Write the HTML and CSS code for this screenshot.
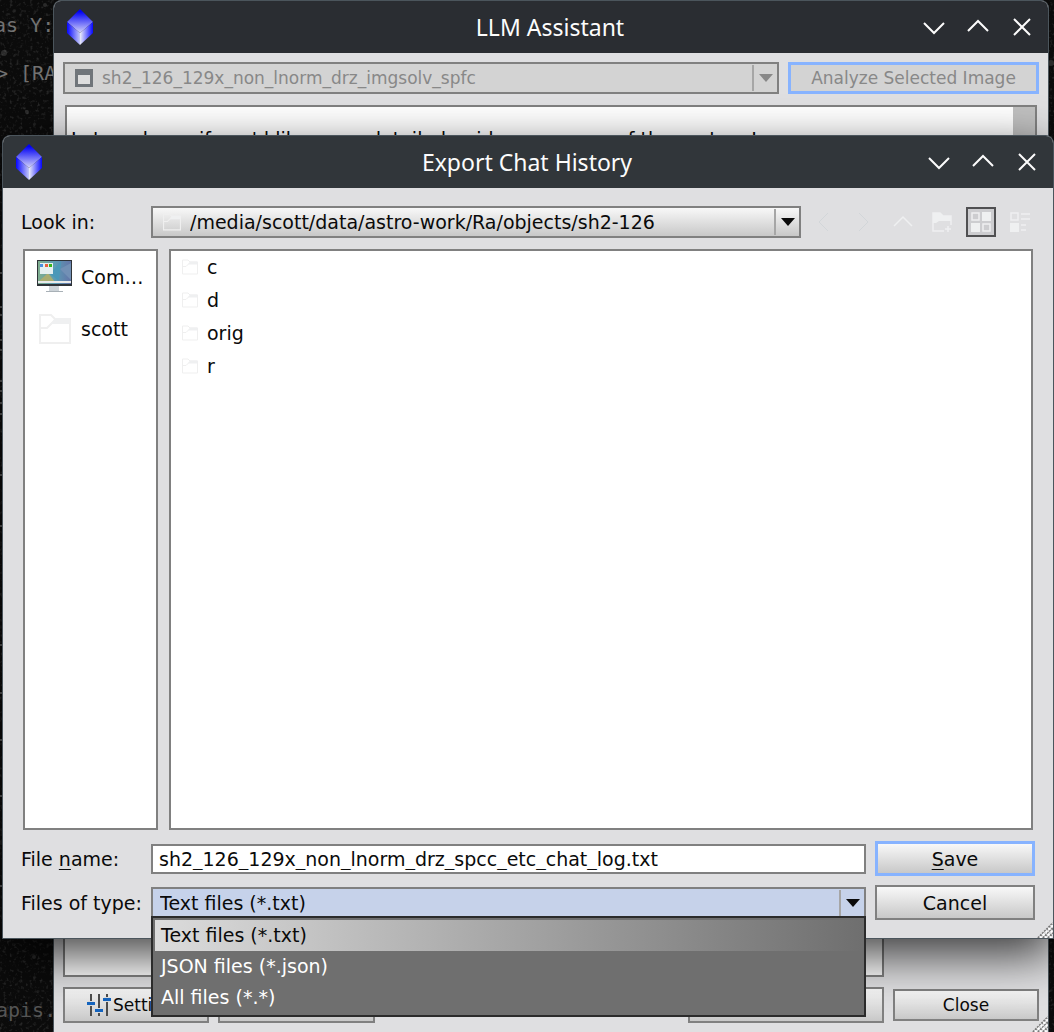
FILE: index.html
```html
<!DOCTYPE html>
<html lang="en">
<head>
<meta charset="utf-8">
<title>Export Chat History</title>
<link rel="stylesheet" href="styles.css">
</head>
<body>
<svg class="defs" width="0" height="0" aria-hidden="true">
  <defs>
    <linearGradient id="gem-top" x1="0" y1="0" x2="0" y2="1"><stop offset="0.1" stop-color="#0000f4"/><stop offset="1" stop-color="#d4d4fb"/></linearGradient>
    <linearGradient id="gem-left"><stop offset="0" stop-color="#0606ff"/><stop offset="1" stop-color="#c4c8f8"/></linearGradient>
    <linearGradient id="gem-right"><stop offset="0" stop-color="#eceefa"/><stop offset="1" stop-color="#0606ff"/></linearGradient>
    <linearGradient id="screen"><stop offset="0" stop-color="#7fae8e"/><stop offset="0.5" stop-color="#5b9cb4"/><stop offset="1" stop-color="#6474a8"/></linearGradient>
    <symbol id="gem" viewBox="0 0 28 36">
      <path d="M14 0 27 13 14 24 1 13Z" fill="url(#gem-top)"/>
      <path d="M1 13 14 24V36L1 24Z" fill="url(#gem-left)"/>
      <path d="M27 13 14 24V36L27 24Z" fill="url(#gem-right)"/>
    </symbol>
    <symbol id="minimize" viewBox="0 0 24 24"><path d="m2 8 10 10L22 8" fill="none" stroke="#fcfcfc" stroke-width="2"/></symbol>
    <symbol id="maximize" viewBox="0 0 24 24"><path d="M2 16 12 6l10 10" fill="none" stroke="#fcfcfc" stroke-width="2"/></symbol>
    <symbol id="close" viewBox="0 0 24 24"><path d="m4 4 16 16M20 4 4 20" fill="none" stroke="#fcfcfc" stroke-width="2"/></symbol>
    <symbol id="folder" viewBox="0 0 32 32">
      <path d="M2 2h10l4 4h15v24H1V2ZM1 15h7l8-8" fill="none" stroke="#efefef" stroke-width="2"/>
      <path d="M16 5h15v6H12Z" fill="#eff0f1"/>
    </symbol>
    <symbol id="arrow" viewBox="0 0 14 8"><path d="M0 0h14L7 8Z" fill="currentColor"/></symbol>
    <symbol id="grip" viewBox="0 0 16 16">
      <path d="M1 16 16 1M6 16 16 6M11 16l5-5" stroke="#777" stroke-width="2" stroke-dasharray="2 1"/>
      <path d="M3 16 16 3M8 16l8-8M13 16l3-3" stroke="#fff" stroke-width="2" stroke-dasharray="2 2"/>
    </symbol>
  </defs>
</svg>

<div class="desktop">
  <svg class="stars" aria-hidden="true">
    <defs>
      <filter id="haze"><feTurbulence type="fractalNoise" baseFrequency="0.3" numOctaves="2" seed="4"/><feColorMatrix values="0 0 0 0 .5  0 0 0 0 .5  0 0 0 0 .5  1.4 0 0 0 -.75"/></filter>
    </defs>
    <rect width="100%" height="100%" filter="url(#haze)" opacity="0.4"/>
    <g fill="#666" opacity="0.35"><circle cx="4" cy="53" r="3"/><circle cx="45" cy="5" r="2"/><circle cx="27" cy="112" r="2"/><circle cx="1051" cy="63" r="3"/><circle cx="34" cy="957" r="2"/></g>
    <path d="M0 273h3M0 307h3M0 315h3M0 340h3M0 350h3M0 381h3M0 391h3M0 403h3M0 414h3M0 475h3M0 526h3M0 645h3M0 693h3M0 740h3M0 796h3M0 886h3" stroke="#606060" stroke-width="2"/>
  </svg>
  <div class="console console-a">as Y:</div>
  <div class="console console-b">&gt; [RA</div>
  <div class="console console-c">apis.</div>

  <section class="window assistant" aria-label="LLM Assistant">
    <header class="titlebar">
      <svg class="gem"><use href="#gem"/></svg>
      <h1>LLM Assistant</h1>
      <div class="controls">
        <button aria-label="Minimize"><svg><use href="#minimize"/></svg></button>
        <button aria-label="Maximize"><svg><use href="#maximize"/></svg></button>
        <button aria-label="Close window"><svg><use href="#close"/></svg></button>
      </div>
    </header>
    <div class="assistant-body">
      <div class="image-row">
        <div class="combo disabled">
          <select disabled aria-label="Image"><option>sh2_126_129x_non_lnorm_drz_imgsolv_spfc</option></select>
          <svg class="combo-icon" viewBox="0 0 18 18"><path d="M0 0h18v18H0Z" fill="#70757a"/><path d="M3 6h12v9H3Z" fill="#dedede"/></svg>
          <span class="combo-arrow"><svg><use href="#arrow"/></svg></span>
        </div>
        <button class="btn focus analyze" disabled>Analyze Selected Image</button>
      </div>
      <div class="chat"><p>Let me know if you'd like more detailed guidance on any of these steps!</p><span class="scroll"></span></div>
      <textarea class="prompt" aria-label="Message"></textarea>
      <div class="action-row">
        <button class="btn settings"><svg viewBox="0 0 24 24"><path d="M4 1v22M12 1v22M20 1v22" stroke="#4d4d4d" stroke-width="2"/><path d="M1 8h6v5H1ZM9 15h6v5H9ZM17 4h6v5h-6Z" fill="#ddd"/><path d="M0 9h8v3H0ZM8 16h8v3H8ZM16 5h8v3h-8Z" fill="#1565c0"/></svg>Settings</button>
        <button class="btn second" aria-label="Clear"></button>
        <button class="btn third" aria-label="Export"></button>
        <button class="btn close-btn">Close</button>
      </div>
    </div>
    <svg class="grip"><use href="#grip"/></svg>
  </section>

  <section class="window dialog" role="dialog" aria-label="Export Chat History">
    <header class="titlebar">
      <svg class="gem"><use href="#gem"/></svg>
      <h1>Export Chat History</h1>
      <div class="controls">
        <button aria-label="Minimize"><svg><use href="#minimize"/></svg></button>
        <button aria-label="Maximize"><svg><use href="#maximize"/></svg></button>
        <button aria-label="Close window"><svg><use href="#close"/></svg></button>
      </div>
    </header>
    <div class="dialog-body">
      <div class="look-row">
        <label for="look">Look in:</label>
        <div class="combo look">
          <select id="look"><option>/media/scott/data/astro-work/Ra/objects/sh2-126</option></select>
          <svg class="combo-icon"><use href="#folder"/></svg>
          <span class="combo-arrow"><svg><use href="#arrow"/></svg></span>
        </div>
        <div class="tools">
          <button aria-label="Back"><svg viewBox="0 0 20 20"><path d="M13 1 4 10l9 9" stroke="#d2d6d9"/></svg></button>
          <button aria-label="Forward"><svg viewBox="0 0 20 20"><path d="m5 1 9 9-9 9" stroke="#d2d6d9"/></svg></button>
          <button aria-label="Parent directory"><svg viewBox="0 0 20 20"><path d="m1 14 9-9 9 9" stroke="#eff0f1" stroke-width="1.5"/></svg></button>
          <button aria-label="New folder"><svg viewBox="0 0 20 20"><path d="M12 19H1V1h7l3 3h8v9M16 14v6M13 17h6" stroke="#eff0f1" stroke-width="1.5"/><path d="M1 1h7l3 3h8v5H7l-3 2H1Z" fill="#eff0f1"/></svg></button>
          <button class="on" aria-label="List view"><svg viewBox="0 0 20 20"><path d="M1 1h7v7H1ZM12 12h7v7h-7Z" stroke="#eff0f1" stroke-width="1.5"/><path d="M11 0h9v9h-9ZM0 11h9v9H0Z" fill="#eff0f1"/></svg></button>
          <button aria-label="Detail view"><svg viewBox="0 0 20 20"><path d="M1 1h7v7H1ZM11 2h9M11 7h9M11 13h5M11 18h5" stroke="#eff0f1" stroke-width="1.5"/><path d="M0 11h9v9H0Z" fill="#eff0f1"/></svg></button>
        </div>
      </div>
      <div class="panes">
        <ul class="places">
          <li>
            <svg viewBox="0 0 36 36"><path d="M12 27h10v5H12Z" fill="#ccd3d8"/><path d="M9 32h17v1H9Z" fill="#a8b0b6"/><path d="M0 1h35v26H0Z" fill="#2e3338"/><path d="M1 2h33v23H1Z" fill="url(#screen)"/><path d="m1 23 10-9 7 9Z" fill="#a9ad72"/><path d="m34 4-11 6 11 11Z" fill="#7290b5"/><path d="M13 15 24 2l-2 20Z" fill="#4a98b8"/><path d="M3 4h13v11H3Z" fill="#e4eff0"/><path d="M3 5h3v3H3Z" fill="#4b8fe0"/><path d="M8 5h3v3H8Z" fill="#e8603c"/><path d="M12 5h3v3h-3Z" fill="#35b518"/><path d="M1 22h33v2H1Z" fill="#e8eaea"/></svg>
            <span>Computer</span>
          </li>
          <li><svg class="home"><use href="#folder"/></svg><span>scott</span></li>
        </ul>
        <ul class="files">
          <li><svg><use href="#folder"/></svg>c</li>
          <li><svg><use href="#folder"/></svg>d</li>
          <li><svg><use href="#folder"/></svg>orig</li>
          <li><svg><use href="#folder"/></svg>r</li>
        </ul>
      </div>
      <div class="form">
        <label for="name">File <u>n</u>ame:</label>
        <input id="name" type="text" value="sh2_126_129x_non_lnorm_drz_spcc_etc_chat_log.txt">
        <button class="btn focus"><span><u>S</u>ave</span></button>
        <label for="type">Files of type:</label>
        <div class="combo type">
          <select id="type"><option>Text files (*.txt)</option></select>
          <span class="combo-arrow"><svg><use href="#arrow"/></svg></span>
          <ul class="menu" role="listbox" aria-label="Files of type">
            <li role="option" aria-selected="true">Text files (*.txt)</li>
            <li role="option">JSON files (*.json)</li>
            <li role="option">All files (*.*)</li>
          </ul>
        </div>
        <button class="btn">Cancel</button>
      </div>
    </div>
    <svg class="grip"><use href="#grip"/></svg>
  </section>
</div>
</body>
</html>
```
FILE: styles.css
```css
* { box-sizing: border-box; }

body {
  margin: 0;
  background: #0b0b0b;
  font: 19px/24px "DejaVu Sans", sans-serif;
  color: #0a0a0a;
}

button, input, select, textarea { font: inherit; color: inherit; margin: 0; }
ul { list-style: none; margin: 0; padding: 0; }
svg { display: block; flex: none; }
u { text-underline-offset: 3px; text-decoration-thickness: 1px; }

.defs { position: absolute; }

.desktop {
  position: relative;
  height: 100vh;
  min-height: 600px;
  overflow: hidden;
}
.stars { position: absolute; width: 100%; height: 100%; }

.console {
  position: absolute;
  color: #717171;
  font: 20px/24px "DejaVu Sans Mono", monospace;
  white-space: pre;
}
.console-a { left: -6px; top: 13px; }
.console-b { left: -4px; top: 61px; }
.console-c { left: -4px; bottom: 10px; color: #555; }

/* Windows */
.window {
  position: absolute;
  display: flex;
  flex-direction: column;
  background: #dfdfe1;
  border: 1px solid #4b555c;
  border-radius: 8px 8px 0 0;
}
.assistant { left: 53px; right: 5px; top: 0; bottom: -1px; font-size: 17px; }
.dialog {
  left: 2px;
  right: 0;
  top: 135px;
  bottom: 93px;
  box-shadow: 0 16px 48px rgba(0, 0, 0, 0.75);
}

.titlebar {
  display: grid;
  grid-template-columns: 132px 1fr 132px;
  align-items: center;
  height: 52px;
  padding: 0 14px 0 12px;
  background: #2a2d32;
  border-radius: 7px 7px 0 0;
  color: #fcfcfc;
}
.dialog .titlebar { background: #31363a; }
.titlebar h1 {
  margin: 0;
  font: 23px/32px "Noto Sans", sans-serif;
  text-align: center;
}
.gem { width: 28px; height: 36px; }
.controls { display: flex; gap: 20px; justify-content: flex-end; }
.controls button { padding: 0; border: 0; background: none; }
.controls svg { width: 24px; height: 24px; }

.grip { position: absolute; right: 0; bottom: 0; width: 16px; height: 16px; }

/* Shared controls */
.btn {
  display: flex;
  align-items: center;
  justify-content: center;
  padding: 0;
  border: 2px solid #808080;
  background: linear-gradient(#f8f8f8, #c8c8c8);
}
.btn.focus { border: 3px solid #87b3ff; }
.btn:disabled { background: #d3d3d3; color: #888; }

.combo {
  display: grid;
  grid-template-columns: 1fr 25px;
  align-items: center;
  border: 2px solid #808080;
  background: linear-gradient(#f8f8f8, #c8c8c8);
}
.combo select {
  grid-area: 1 / 1 / 2 / 3;
  width: 100%;
  height: 100%;
  padding: 0 28px 0 7px;
  border: 0;
  appearance: none;
  background: none;
  opacity: 1;
}
.combo-icon { grid-area: 1 / 1; width: 18px; height: 18px; margin-left: 10px; }
.combo-arrow {
  grid-area: 1 / 2;
  display: grid;
  place-items: center;
  height: 26px;
  border-left: 2px solid #a6a6a6;
  pointer-events: none;
}
.combo-arrow svg { width: 14px; height: 8px; }
.combo.disabled { background: #d3d3d3; color: #888; }

/* Assistant window */
.assistant-body {
  flex: 1;
  min-height: 0;
  display: flex;
  flex-direction: column;
  padding: 9px;
}
.image-row { display: grid; grid-template-columns: 1fr 251px; gap: 9px; height: 32px; }
.image-row select { padding-left: 37px; }
.chat {
  flex: 1;
  min-height: 0;
  display: flex;
  justify-content: space-between;
  margin: 11px 2px;
  border: 2px solid #808080;
  background: #fff;
  overflow: hidden;
  font-size: 19px;
}
.chat p { margin: 20px 0 0 4px; white-space: nowrap; }
.scroll { width: 22px; background: #c0c0c0; }
.prompt {
  height: 80px;
  margin: 0 155px 10px 0;
  border: 2px solid #808080;
  background: #fff;
  resize: none;
}
.action-row {
  display: grid;
  grid-template-columns: 146px 157px 1fr 196px 146px;
  gap: 9px;
  height: 36px;
}
.third { grid-column: 4; }
.close-btn { grid-column: 5; margin: 2px 0; }
.settings { justify-content: flex-start; gap: 2px; padding-left: 22px; }
.settings svg { width: 24px; height: 24px; }

/* Export dialog */
.dialog-body {
  flex: 1;
  min-height: 0;
  display: flex;
  flex-direction: column;
  gap: 11px;
  padding: 18px;
}
.look-row {
  display: grid;
  grid-template-columns: 130px 1fr 234px;
  height: 32px;
  align-items: center;
}
.look { height: 32px; }
.look select { padding-left: 37px; }
.tools { display: flex; justify-content: space-between; padding-left: 9px; }
.tools button {
  display: grid;
  place-items: center;
  width: 30px;
  height: 30px;
  padding: 0;
  border: 0;
  background: none;
}
.tools svg { width: 20px; height: 20px; fill: none; stroke-width: 1; }
.tools .on { border: 2px solid #505052; background: #cdcdd0; }

.panes {
  flex: 1;
  min-height: 0;
  display: grid;
  grid-template-columns: 135px 1fr;
  gap: 11px;
  margin: 0 2px;
}
.places, .files { border: 2px solid #808080; background: #fff; overflow: hidden; }
.places li {
  display: grid;
  grid-template-columns: 36px 1fr;
  gap: 8px;
  align-items: center;
  height: 52px;
  padding: 0 12px;
}
.places span { overflow: hidden; text-overflow: ellipsis; white-space: nowrap; }
.places svg { width: 36px; height: 36px; }
.places .home { width: 32px; height: 32px; margin: 0 2px; }
.files li { display: flex; align-items: center; gap: 9px; height: 33px; padding: 0 0 2px 11px; }
.files svg { width: 16px; height: 16px; }

.form {
  display: grid;
  grid-template-columns: 121px 1fr 160px;
  grid-auto-rows: 35px;
  gap: 9px;
  align-items: center;
}
.form label { white-space: nowrap; }
.form input {
  height: 30px;
  min-width: 0;
  padding: 0 6px;
  border: 2px solid #808080;
  background: #fff;
}
.form .btn { height: 35px; }
.type { position: relative; height: 31px; background: #c6d2ea; }
.menu {
  position: absolute;
  left: -2px;
  right: -2px;
  top: 100%;
  z-index: 1;
  padding: 2px;
  border: 2px solid #2b2b2b;
  background: #6f6f6f;
  color: #fff;
}
.menu li { height: 31px; padding: 0 6px; line-height: 31px; }
.menu [aria-selected] { background: linear-gradient(90deg, #dcdcdc, #6f6f6f); color: #0a0a0a; }
```
